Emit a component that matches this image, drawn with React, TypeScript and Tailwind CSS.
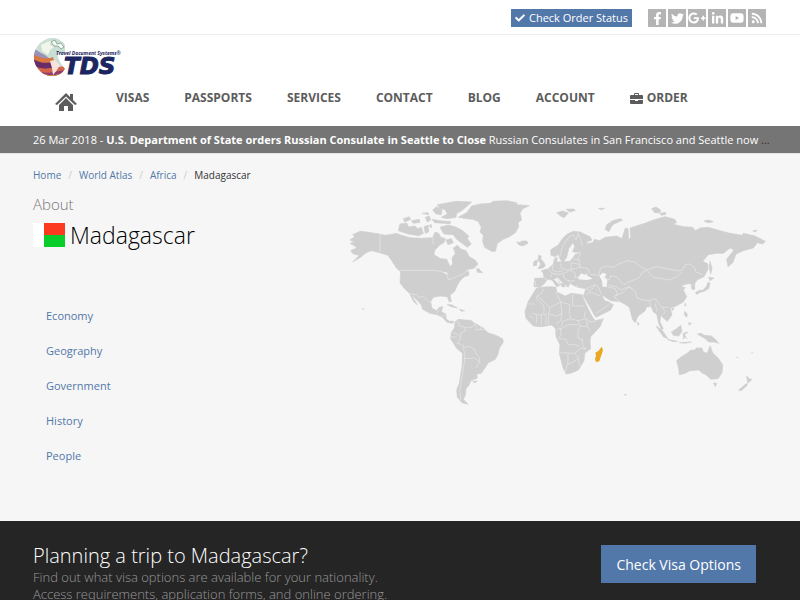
import type { ReactNode } from "react";
import {
  FaFacebookF,
  FaTwitter,
  FaGooglePlusG,
  FaLinkedinIn,
  FaYoutube,
  FaRss,
  FaCheck,
} from "react-icons/fa";

type SocialLink = {
  name: string;
  icon: ReactNode;
};

const socialLinks: SocialLink[] = [
  { name: "Facebook", icon: <FaFacebookF size={13} /> },
  { name: "Twitter", icon: <FaTwitter size={13} /> },
  { name: "Google Plus", icon: <FaGooglePlusG size={18} /> },
  { name: "LinkedIn", icon: <FaLinkedinIn size={13} /> },
  { name: "YouTube", icon: <FaYoutube size={14} /> },
  { name: "RSS", icon: <FaRss size={12} /> },
];

const menuItems = ["VISAS", "PASSPORTS", "SERVICES", "CONTACT", "BLOG", "ACCOUNT"];

const breadcrumbs = ["Home", "World Atlas", "Africa"];

const sections = ["Economy", "Geography", "Government", "History", "People"];

const landPaths = [
  // North America
  "M30,150 L44,140 38,134 60,124 80,126 118,132 135,136 150,134 168,130 185,136 210,143 245,145 278,143 285,126 296,130 302,142 316,146 312,158 298,166 284,182 282,194 302,206 320,207 326,222 333,230 338,220 336,204 346,190 340,174 352,166 364,178 378,182 388,200 405,210 414,222 402,235 385,238 372,248 386,244 386,256 372,260 358,275 350,290 344,304 330,316 334,334 328,336 322,320 300,318 280,322 272,335 276,355 290,362 298,352 308,350 304,366 318,372 318,386 328,394 342,394 338,400 320,396 308,382 292,374 270,370 248,358 244,344 228,328 216,312 222,328 232,344 222,336 208,310 190,292 180,278 182,245 170,235 155,212 144,196 118,188 95,182 78,188 62,202 38,216 58,196 40,192 32,182 50,174 44,168 30,160 44,156z",
  // Arctic islands
  "M175,122 L180,102 200,99 206,111 224,108 234,116 244,112 250,130 236,137 205,132z",
  "M190,86 L208,80 212,88 194,96z M214,92 L238,88 240,97 220,100z M246,70 L264,68 266,74z M256,82 L268,78 272,90 262,96z M252,110 L264,106 266,126 256,130z M266,106 L274,104 274,114z",
  "M300,112 L325,105 350,112 368,122 386,138 382,146 394,162 382,172 366,160 350,148 340,134 312,132z",
  "M292,44 L325,38 350,34 395,36 385,45 365,62 350,70 348,82 320,86 304,82 322,72 316,60 300,54z M278,60 L290,50 306,58 304,74 288,72z M276,88 L300,92 332,95 330,101 284,98z M318,150 L334,146 340,158 324,164z",
  // Greenland
  "M355,82 L380,68 395,48 420,42 450,40 460,34 500,32 530,38 530,44 568,47 548,56 540,70 545,90 534,98 536,110 526,128 508,140 490,148 472,160 466,184 455,184 434,172 428,155 430,136 420,126 424,112 414,94 398,88 380,86z",
  "M530,155 L540,158 545,153 560,153 564,160 548,168 536,164z",
  // Caribbean, Newfoundland, Falklands
  "M322,344 L334,344 352,354 334,350z M358,358 L374,362 364,364z M410,236 L416,236 428,248 412,247z M398,574 L412,573 404,578z M68,356 L71,356 70,359z",
  // South America
  "M345,396 L355,388 374,390 392,391 404,400 430,414 445,429 465,435 488,446 490,456 478,475 474,492 466,508 445,518 436,532 424,550 410,552 412,564 392,572 388,584 378,596 376,616 370,628 384,643 366,638 352,622 350,600 358,580 366,530 368,490 350,475 332,446 334,428 344,412z",
  // Svalbard and the Russian islands
  "M650,68 L668,63 685,69 672,83 662,78z M678,58 L700,57 706,61 690,66z M775,55 L794,55 784,59z M796,118 L800,104 818,92 840,86 848,90 818,104 806,125z M935,56 L948,51 962,60 960,68 944,68z M960,70 L976,67 978,73 964,76z M1092,93 L1106,90 1120,95 1104,98z M1238,123 L1250,120 1248,125z",
  // British Isles
  "M596,196 L604,198 602,206 612,218 616,228 608,234 594,236 602,222 594,210z M582,214 L592,210 590,226 580,227z",
  // Scandinavia
  "M633,196 L632,180 640,174 655,165 668,145 682,132 700,124 720,126 750,140 756,150 740,156 744,170 730,190 706,196 696,186 704,170 698,160 686,176 680,202 668,218 660,206 655,192 646,200z",
  // Europe and Asia
  "M582,290 L584,265 612,264 610,250 604,242 625,236 640,222 643,206 652,202 650,216 690,214 698,204 708,192 730,186 744,160 758,158 764,148 778,152 796,142 830,138 846,146 856,114 864,116 866,150 872,142 870,114 878,112 895,106 915,100 940,90 975,80 1004,88 1010,98 996,102 1030,110 1058,112 1066,122 1080,114 1105,112 1140,122 1170,130 1206,136 1210,130 1245,138 1276,154 1268,162 1252,158 1240,174 1210,182 1188,192 1178,218 1164,230 1160,208 1182,180 1170,174 1150,190 1130,190 1105,194 1088,214 1104,222 1104,238 1092,260 1074,268 1064,280 1064,298 1056,298 1052,280 1030,284 1024,292 1036,292 1030,300 1040,320 1030,336 1004,350 990,354 996,374 982,394 970,384 962,376 960,396 970,416 964,418 956,400 950,372 940,366 934,350 920,350 914,364 894,378 886,398 878,390 868,352 854,342 840,335 812,332 796,322 784,314 794,332 806,336 820,344 812,360 768,382 760,370 746,344 730,318 738,296 714,292 700,286 690,280 684,292 672,278 676,290 666,290 650,264 640,268 660,286 650,290 636,270 622,268 612,282 600,292z",
  // Africa
  "M588,296 L604,292 630,290 648,292 650,306 676,318 694,310 726,314 732,330 746,360 758,382 766,392 790,386 780,410 752,440 750,456 752,476 734,490 732,512 715,540 695,549 678,552 668,530 658,490 660,465 648,440 647,416 635,405 605,410 580,408 558,385 555,365 565,334 580,310z",
  // Southern Asia islands and Japan
  "M892,396 L898,402 894,406z M948,408 L966,420 984,446 970,440z M982,448 L1012,454 1000,455z M994,426 L1010,416 1022,406 1026,424 1016,438 1000,436z M1030,430 L1044,426 1034,434 1040,446 1034,440 1030,448z M1034,364 L1042,372 1040,382 1034,376z M1046,398 L1054,400 1048,406z M1036,340 L1038,348 1034,346z M996,354 L1002,356 996,362z M1018,458 L1054,456 1036,460z",
  "M1072,432 L1084,430 1092,436 1114,438 1126,448 1136,460 1122,456 1106,456 1096,446z M1066,308 L1076,302 1090,300 1100,288 1104,276 1110,280 1106,296 1092,304 1076,308 1072,314z M1106,262 L1122,264 1110,272z M1110,214 L1116,236 1112,252 1108,232z",
  // Australia and New Zealand
  "M1010,512 L1024,500 1044,488 1052,480 1066,480 1068,474 1086,474 1090,486 1102,490 1110,467 1118,488 1134,504 1148,524 1146,548 1134,566 1112,568 1098,554 1088,550 1076,540 1050,542 1036,550 1018,554 1016,536z M1120,579 L1130,580 1126,590z M1220,558 L1228,566 1236,568 1224,580 1222,572z M1220,580 L1222,586 1204,602 1196,600z M1188,500 L1196,505 M1232,490 L1240,487 M854,613 L859,614 856,617z",
];

const waterPaths = [
  // Black Sea
  "M714,262 L724,250 734,254 744,250 740,256 758,266 740,270 716,268z",
  // Caspian Sea
  "M778,258 L788,248 800,252 794,262 802,270 800,290 788,290 786,272z",
  // Adriatic
  "M648,262 L654,264 668,280 664,282z",
  // Gulf of Bothnia
  "M690,178 L698,160 702,168 696,186 708,188 724,187 702,194 690,206 682,204z",
  // Hudson Bay
  "M288,178 L306,168 336,170 342,190 330,206 308,204 284,194z",
  // Great Lakes
  "M308,246 L318,246 326,254 318,252z",
];

const borderPaths = [
  "M120,132 V188 M180,241 H285 L304,244 318,250 326,270 340,264 368,252 380,244 M278,143 L280,164",
  "M208,310 L228,314 236,322 250,320 262,332 274,340 M288,370 L298,360 M304,378 L318,374",
  // South America
  "M352,392 L358,408 374,412 376,424 364,428 362,440 M374,412 L396,412 404,402 M404,402 L412,418 M422,410 L422,420 M404,420 L432,418 M338,428 L356,434 362,444 352,460 368,464 376,474 384,468 404,478 408,492 418,502 418,514 406,506 M368,468 L374,490 374,510 366,560 360,600 362,630 M374,506 L406,504 M420,514 L408,534 M332,440 L350,442",
  // Africa
  "M610,296 L606,310 590,318 590,328 M594,320 L630,352 662,336 648,306 M590,328 L612,348 612,372 598,376 578,370 M565,342 L584,342 M630,352 L628,368 612,376 M662,336 L690,344 M698,312 L698,348 734,348 M690,344 L688,366 692,386 714,392 740,386 M662,336 L666,370 650,378 628,372 M666,370 L662,392 648,402 M692,386 L668,394 664,410 M740,386 L750,396 768,394 M736,364 L732,384 M740,388 L742,408 750,424 M714,392 L720,408 740,410 M720,408 L714,424 714,444 730,452 M650,418 L668,414 686,404 714,404 M660,414 L664,434 654,446 M656,446 L678,448 684,464 704,464 720,470 M658,488 L704,490 720,476 740,474 M684,492 L684,524 700,516 716,504 704,490 M676,548 L682,520 M716,504 L718,528 M726,446 L728,464 736,480 M590,376 V400 M604,376 V408 M618,376 V406 M626,372 V404 M566,376 L580,386",
  // Europe
  "M584,270 L588,288 M610,264 L624,270 M625,238 L636,250 632,262 M640,224 L636,240 650,246 670,242 M662,218 L664,234 680,240 694,238 692,218 M636,250 L652,254 670,250 686,244 M670,250 L672,264 684,272 694,280 M690,240 L706,250 704,262 718,262 M684,272 L704,272 M694,218 L714,222 722,232 706,236 694,238 M700,206 L720,212 M722,232 L744,236 748,248 M722,188 L714,204 722,232 M660,200 L668,168 688,140 700,134 708,150 714,130 722,148 728,170",
  // Central Asia
  "M750,252 L776,256 782,234 800,228 820,232 832,224 862,212 884,216 896,226 920,240 908,246 896,264 880,270 862,278 M810,258 L830,260 840,272 852,284 862,278 M806,286 L830,290 840,300 868,290 878,298 M792,262 L808,270 812,258 M802,290 L826,296 832,310 822,322 840,335 M850,306 L868,290 886,306 890,322 906,330 928,332 946,326 956,340 M826,318 L850,306 M920,240 L950,230 980,236 1012,242 1028,240 1036,224 1050,222 1064,234 1068,246 1088,254 M920,240 L940,262 966,266 988,270 1010,260 1026,246 M928,332 L932,350 M946,340 L950,364 M956,340 L966,352 986,352 M966,352 L976,366 970,374 M1060,284 L1054,288",
  // Middle East
  "M740,296 L748,302 760,294 764,284 776,292 784,312 M738,296 L766,284 M738,316 L750,306 780,318 M768,370 L796,352 808,340 M710,284 L714,292",
];

function WorldMap() {
  return (
    <svg
      viewBox="0 0 1290 660"
      role="img"
      aria-label="World map with Madagascar highlighted"
      className="w-full"
    >
      <g fill="#cfcfcf" stroke="#cfcfcf" strokeWidth="2" strokeLinejoin="round">
        {landPaths.map((d) => (
          <path key={d} d={d} />
        ))}
      </g>
      <g fill="#f6f6f6">
        {waterPaths.map((d) => (
          <path key={d} d={d} />
        ))}
      </g>
      <g fill="none" stroke="#e9e9e9" strokeWidth="2" strokeLinejoin="round">
        {borderPaths.map((d) => (
          <path key={d} d={d} />
        ))}
      </g>
      <path
        d="M785,470 L789,480 784,496 778,514 768,517 765,506 768,498 766,488 776,482z"
        fill="#e9a820"
      />
    </svg>
  );
}

function Logo() {
  return (
    <svg width="92" height="42" viewBox="0 0 92 42" role="img" aria-label="Travel Document Systems" className="overflow-visible">
      <defs>
        <clipPath id="globe">
          <path d="M32,8 C27,0 17,-1 10,4 C-1,11 -2,26 7,34 C15,42 27,40 32,32 C29,28 24,22 25,17 L32,16z" />
        </clipPath>
      </defs>
      <g clipPath="url(#globe)">
        <path d="M0,0 H34 V42 H0z" fill="#c9dfd3" />
        <path d="M0,10 C4,14 8,16 12,18 L20,24 H0z" fill="#9a92b8" />
        <path d="M0,17 C8,22 16,22 20,20 L22,27 C12,30 5,28 0,24z" fill="#d97842" />
        <path d="M0,22 C8,27 15,26 23,25 V31 C13,34 6,32 0,28z" fill="#682d68" />
        <path d="M2,29 C10,34 18,30 34,29 V42 H6z" fill="#d5634c" />
        <path d="M6,34 C14,38 22,34 34,33 V42 H10z" fill="#8c3c70" />
        <path d="M12,37 C20,40 26,37 34,34 V42 H12z" fill="#df9b48" />
        <path d="M8,8 L14,5 18,4 17,8 21,10 17,13 15,18 12,16 9,14z" fill="#f2f5e9" />
        <path d="M17,24 L22,23 27,28 24,33 20,38 19,31z" fill="#f4e4dc" />
        <path d="M18,5 L22,3 24,7 28,6 31,10 28,12 25,9 21,9z" fill="#f8faf5" stroke="#91aaa0" />
      </g>
      <text
        x="23"
        y="18"
        fontSize="5"
        fontWeight="700"
        fontStyle="italic"
        fill="#1b2560"
        className="font-['Open_Sans',sans-serif]"
      >
        Travel Document Systems®
      </text>
      <text
        x="31"
        y="37"
        fontSize="23"
        fontWeight="700"
        fontStyle="italic"
        fill="#1b2560"
        stroke="#1b2560"
        className="font-['DejaVu_Sans',sans-serif]"
      >
        TDS
      </text>
    </svg>
  );
}

function HomeIcon() {
  return (
    <svg width="22" height="19" viewBox="0 0 22 19" fill="#5c5c5c" aria-hidden="true">
      <path d="M11,0 L15,4 V1 H18 V7 L22,11 20,12 11,3.5 2,12 0,11z" />
      <path d="M11,5 L18,12 V18 H13 V13 H9 V18 H4 V12z" />
    </svg>
  );
}

function BriefcaseIcon() {
  return (
    <svg width="13" height="11" viewBox="0 0 13 11" fill="#5c5c5c" aria-hidden="true">
      <path d="M4,2 V1 Q4,0 5,0 H8 Q9,0 9,1 V2 H12 Q13,2 13,3 V6 H0 V3 Q0,2 1,2z M5,1 V2 H8 V1z" fillRule="evenodd" />
      <path d="M0,7 H5 V8 H8 V7 H13 V10 Q13,11 12,11 H1 Q0,11 0,10z" />
    </svg>
  );
}

function Flag() {
  return (
    <svg width="32" height="24" viewBox="0 0 32 24" role="img" aria-label="Flag of Madagascar">
      <path d="M0,0 H11 V24 H0z" fill="#ffffff" />
      <path d="M11,0 H32 V12 H11z" fill="#fc3a20" />
      <path d="M11,12 H32 V24 H11z" fill="#08cd2a" />
    </svg>
  );
}

export default function App() {
  return (
    <div className="bg-[#f6f6f6] font-['Open_Sans',sans-serif] text-[#333333]">
      <header className="bg-white">
        <div className="flex h-[35px] items-center justify-end gap-4 border-b border-[#eeeeee] pt-[2px] pr-[34px]">
          <button className="flex h-[18px] items-center gap-1 bg-[#5277a9] px-1 text-[11px] leading-[18px] text-white">
            <FaCheck size={10} />
            Check Order Status
          </button>
          <div className="flex gap-[2px]">
            {socialLinks.map((link) => (
              <a
                key={link.name}
                href="#"
                aria-label={link.name}
                className="flex h-[18px] w-[18px] items-center justify-center overflow-hidden bg-[#b4b4b4] text-white"
              >
                {link.icon}
              </a>
            ))}
          </div>
        </div>
        <a href="#" className="block w-fit pt-[2px] pl-[33px]">
          <Logo />
        </a>
        <nav className="flex h-[47px] items-start gap-[35px] pt-[10px] pl-[55px] text-[12px] leading-[18px] font-bold text-[#5c5c5c]">
          <a href="#" aria-label="Home" className="mr-1 pt-1">
            <HomeIcon />
          </a>
          {menuItems.map((item) => (
            <a key={item} href="#">
              {item}
            </a>
          ))}
          <a href="#" className="flex items-center gap-1">
            <BriefcaseIcon />
            ORDER
          </a>
        </nav>
      </header>

      <div className="border-b border-[#e4e4e4] bg-[#757575] pr-5 pl-[33px]">
        <p className="truncate text-[11px] leading-[27px] text-[#333333]">
          <span className="text-white">
            26 Mar 2018 - <b>U.S. Department of State orders Russian Consulate in Seattle to Close</b>{" "}
            Russian Consulates in San Francisco and Seattle now
          </span>{" "}
          ...
        </p>
      </div>

      <main className="px-[33px] pb-12">
        <ol className="flex pt-[13px] text-[10px] leading-[16px]">
          {breadcrumbs.map((crumb) => (
            <li key={crumb}>
              <a href="#" className="text-[#5277a9]">
                {crumb}
              </a>
              <span className="px-[7px] text-[#cccccc]">/</span>
            </li>
          ))}
          <li>Madagascar</li>
        </ol>
        <div className="flex">
          <div className="w-[307px] shrink-0">
            <h1 className="pt-[11px] font-light text-black">
              <span className="block text-[15px] leading-[20px] text-[#777777]">About</span>
              <span className="mt-1 flex items-center gap-[5px] text-[23px] leading-[34px]">
                <Flag />
                Madagascar
              </span>
            </h1>
            <ul className="mt-[46px] pl-[13px] text-[11px] leading-[35px]">
              {sections.map((section) => (
                <li key={section}>
                  <a href="#" className="text-[#5277a9]">
                    {section}
                  </a>
                </li>
              ))}
            </ul>
          </div>
          <div className="-mr-[3px] flex-1 pt-[7px]">
            <WorldMap />
          </div>
        </div>
      </main>

      <footer className="flex items-start justify-between bg-[#252525] px-[33px] pt-[22px] pb-1 font-light">
        <div>
          <h2 className="text-[20px] leading-[26px] text-white">Planning a trip to Madagascar?</h2>
          <p className="text-[13px] leading-[17px] text-[#999999]">
            Find out what visa options are available for your nationality.
            <br />
            Access requirements, application forms, and online ordering.
          </p>
        </div>
        <button className="mt-[2px] mr-[11px] h-[38px] bg-[#5277a9] px-[15px] text-[14px] font-normal text-white">
          Check Visa Options
        </button>
      </footer>
    </div>
  );
}
